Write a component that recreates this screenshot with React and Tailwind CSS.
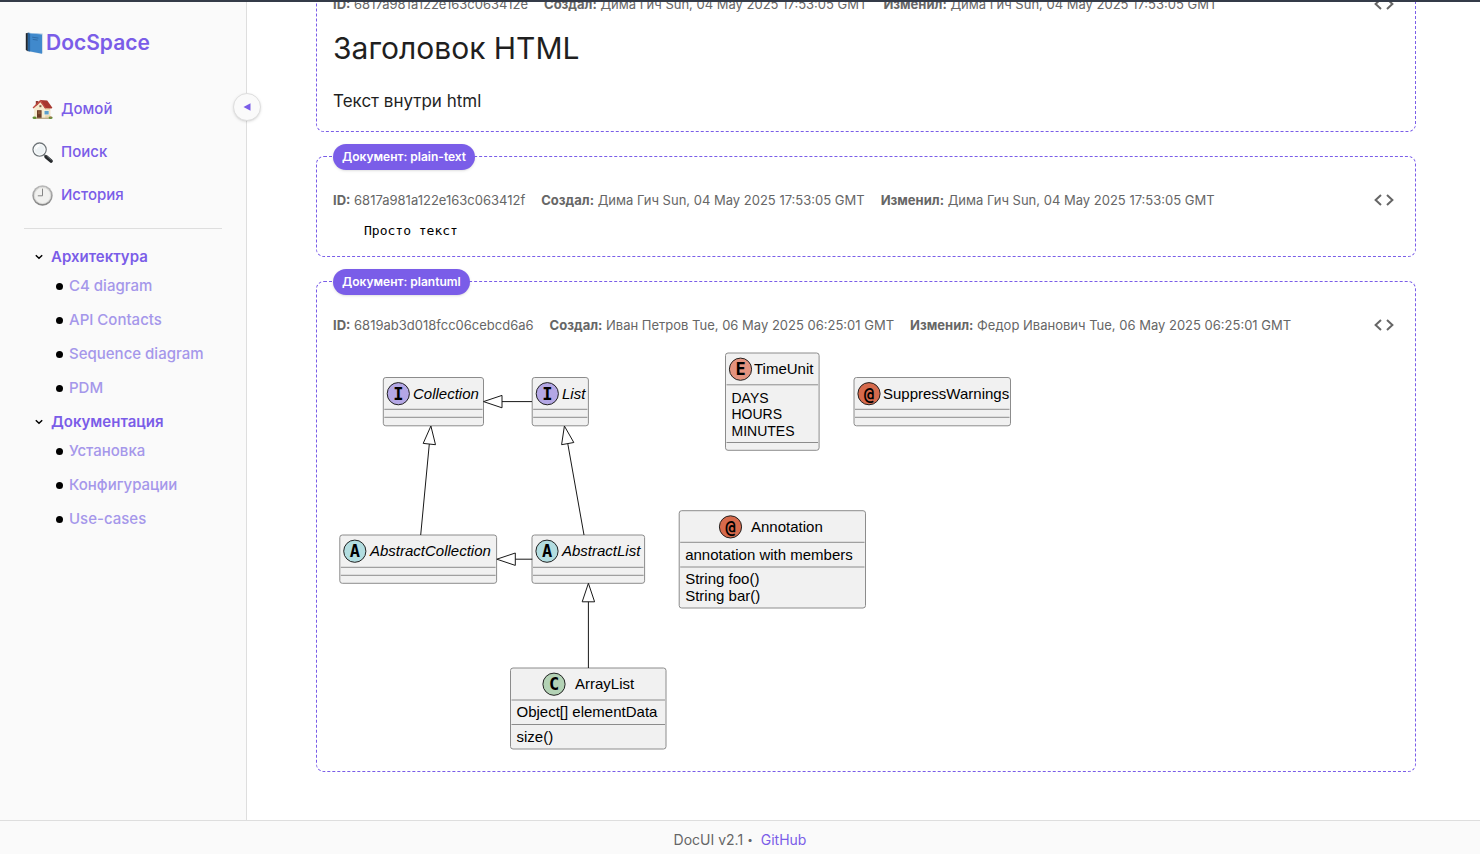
import { useState } from "react";

function BookIcon() {
  return (
    <svg viewBox="0 0 19 23" className="h-[23px] w-5 shrink-0" aria-hidden="true">
      <path d="M1.3 1.3 3.8.8v18.6L1.3 18z" fill="#20262e" />
      <path d="M3.4.8 17.4 1.6l1.2.9v17.8L17 22.1 3.4 19.4z" fill="#e4e7ea" />
      <path d="M3.4.8 17.6 2.2v19.6L3.4 19z" fill="#4089cc" />
      <path d="M3.4.8 5.6 1v18.5L3.4 19z" fill="#27629c" />
      <path d="M3.4.8 18.6 1.8l-.9.7L5.6 1.4z" fill="#a9c9e6" />
      <path d="M7.7 5.2l6.2.9M8.2 7.4l5 .7" stroke="#2f6ca8" strokeWidth="1" fill="none" />
    </svg>
  );
}

function HouseIcon() {
  return (
    <svg viewBox="0 0 21 21" className="size-[21px] shrink-0" aria-hidden="true">
      <path d="M3.8 2h2.6v4.5H3.8z" fill="#8f3b32" />
      <path d="M2.6 9 8.5 3l9.8 6.2v10.3H2.6z" fill="#e9d8b0" />
      <path d="M2.6 9 8.6 3.4l4.6 6v10H2.6z" fill="#f6ebcf" />
      <path d="M8.4.9 15.2 1.6l5.2 7.2-.9.8-6.6-.4z" fill="#a8382f" />
      <path d="M8.4.7.6 8.4l.9 1.1L8.4 3.3l4.6 6.2 1.2-.6z" fill="#bf4a40" />
      <path d="M5 11.2h4.6v8.4H5z" fill="#6b3a26" />
      <path d="M5.9 12.2h2.8v3H5.9z" fill="#8c5a3b" />
      <path d="M11.8 11.2h5.6v5h-5.6z" fill="#fff8e4" />
      <path d="M12.5 11.9h4.2v3.6h-4.2z" fill="#5c9fcc" />
      <path d="M7.4 6.2h2v2h-2z" fill="#826148" />
      <path d="M2.8 18.7h15.7v1.2H2.8z" fill="#b9a685" />
      <ellipse cx="2.5" cy="18.8" rx="2" ry="1.3" fill="#5f8f35" />
      <ellipse cx="18.6" cy="18.8" rx="2" ry="1.3" fill="#5f8f35" />
      <circle cx="18.8" cy="18.1" r=".7" fill="#cf5a55" />
    </svg>
  );
}

function SearchIcon() {
  return (
    <svg viewBox="0 0 21 21" className="size-[21px] shrink-0" aria-hidden="true">
      <path d="m11.8 12.4 3 3" stroke="#8b9094" strokeWidth="2" />
      <path d="m14.2 14.8 4.8 4.2" stroke="#25282b" strokeWidth="3.6" strokeLinecap="round" />
      <path d="m14.8 14.2 4.4 3.8" stroke="#6a6f73" strokeWidth=".8" strokeLinecap="round" />
      <circle cx="7.6" cy="7.6" r="6.6" fill="#edf2f4" stroke="#6d7377" strokeWidth="1.3" />
      <circle cx="7.6" cy="7.6" r="5.4" fill="none" stroke="#fff" strokeWidth=".8" />
      <path d="M4.2 7.2a3.6 3.6 0 0 1 3.4-3.4" stroke="#fff" strokeWidth="1.4" fill="none" />
    </svg>
  );
}

function ClockIcon() {
  return (
    <svg viewBox="0 0 21 21" className="size-[21px] shrink-0" aria-hidden="true">
      <defs>
        <linearGradient id="clock-rim" x1="0" y1="0" x2="0" y2="1">
          <stop offset="0" stopColor="#bcbcbc" />
          <stop offset="1" stopColor="#858585" />
        </linearGradient>
      </defs>
      <circle cx="10.5" cy="10.5" r="10.2" fill="url(#clock-rim)" />
      <circle cx="10.5" cy="10.5" r="8.5" fill="#f1f1ef" />
      <circle cx="10.5" cy="10.5" r="8.1" fill="none" stroke="#d5d5d3" strokeWidth=".8" />
      <path d="M10.5 3.6v7.2H5.8" fill="none" stroke="#858585" strokeWidth="1" />
    </svg>
  );
}

const mainLinks = [
  { label: "Домой", Icon: HouseIcon },
  { label: "Поиск", Icon: SearchIcon },
  { label: "История", Icon: ClockIcon },
];

const sections = [
  { title: "Архитектура", items: ["C4 diagram", "API Contacts", "Sequence diagram", "PDM"] },
  { title: "Документация", items: ["Установка", "Конфигурации", "Use-cases"] },
];

function Section({ title, items }) {
  const [open, setOpen] = useState(true);
  return (
    <section>
      <button
        type="button"
        aria-expanded={open}
        onClick={() => setOpen(!open)}
        className="flex h-6 items-center gap-2 text-[15px] font-semibold text-[#7a5de8]"
      >
        <svg viewBox="0 0 8 6" className="h-1.5 w-2" aria-hidden="true">
          <path d="m.8 1.2 3.2 3 3.2-3" fill="none" stroke="#000" strokeWidth="1.5" />
        </svg>
        {title}
      </button>
      {open && (
        <ul className="pl-[21px]">
          {items.map((item) => (
            <li key={item} className="flex h-[34px] items-center gap-1.5">
              <span className="size-[7px] rounded-full bg-black" />
              <a href="#" className="text-[15px] font-medium text-[#a597ea]">
                {item}
              </a>
            </li>
          ))}
        </ul>
      )}
    </section>
  );
}

function Sidebar() {
  return (
    <aside className="relative w-[247px] shrink-0 border-r border-[#dedede] bg-[#fafafa] px-6 pt-[29px]">
      <a href="#" className="flex h-6 items-center gap-0.5 text-[21px] font-semibold text-[#7a5de8]">
        <BookIcon />
        DocSpace
      </a>
      <nav className="mt-[33px] flex flex-col gap-px border-b border-[#dedede] pb-3 pl-2">
        {mainLinks.map(({ label, Icon }) => (
          <a key={label} href="#" className="flex h-[42px] items-center gap-2 text-[15px] font-medium text-[#7a5de8]">
            <Icon />
            {label}
          </a>
        ))}
      </nav>
      <nav className="mt-4 flex flex-col gap-[5px] pl-[11px]">
        {sections.map((section) => (
          <Section key={section.title} {...section} />
        ))}
      </nav>
      <button
        type="button"
        aria-label="Свернуть меню"
        className="absolute top-[91px] -right-[15px] z-10 flex size-7 items-center justify-center rounded-full border border-[#dedede] bg-[#fafafa] shadow-sm"
      >
        <svg viewBox="0 0 8 8" className="size-2" aria-hidden="true">
          <path d="M.5 4 7.5.2v7.6z" fill="#7a5de8" />
        </svg>
      </button>
    </aside>
  );
}

function DocCard({ type, id, created, changed, children }) {
  return (
    <article className="relative rounded-lg border border-dashed border-[#7a5de8] px-4 pt-[27px] pb-4">
      <span className="absolute -top-[13px] left-4 flex h-[26px] items-center rounded-full bg-[#7a5de8] px-[9px] text-xs font-semibold text-white shadow-sm">
        Документ: {type}
      </span>
      <header className="flex h-8 items-center justify-between text-[13px] text-[#666]">
        <div className="flex gap-4 pt-0.5">
          <span><strong className="font-bold">ID:</strong> {id}</span>
          <span><strong className="font-bold">Создал:</strong> {created}</span>
          <span><strong className="font-bold">Изменил:</strong> {changed}</span>
        </div>
        <button type="button" aria-label="Исходный код" className="flex h-8 w-[30px] items-center justify-center">
          <svg viewBox="0 0 20 12" className="h-3 w-5" aria-hidden="true">
            <path d="M7 .9 1.6 6 7 11.1M13 .9 18.4 6 13 11.1" fill="none" stroke="#666" strokeWidth="2" />
          </svg>
        </button>
      </header>
      {children}
    </article>
  );
}

const nodes = [
  { x: 50.3, y: 36.5, w: 100.2, h: 48.3, kind: "I", fill: "#b4a7e5", cx: 65.3, name: "Collection", tx: 80, italic: true, lines: [68.3, 76.3] },
  { x: 199.2, y: 36.5, w: 56.2, h: 48.3, kind: "I", fill: "#b4a7e5", cx: 214.3, name: "List", tx: 229, italic: true, lines: [68.3, 76.3] },
  { x: 6.8, y: 194, w: 156.8, h: 48.3, kind: "A", fill: "#b2dde0", cx: 21.8, name: "AbstractCollection", tx: 37, italic: true, lines: [226.3, 234.3] },
  { x: 199, y: 194, w: 112.6, h: 48.3, kind: "A", fill: "#b2dde0", cx: 214, name: "AbstractList", tx: 229, italic: true, lines: [226.3, 234.3] },
  { x: 177.5, y: 327, w: 155.5, h: 81, kind: "C", fill: "#b3d2b5", cx: 221, name: "ArrayList", tx: 242, lines: [359, 383.5], rows: [["Object[] elementData", 376], ["size()", 401]] },
  { x: 346.2, y: 169.7, w: 186.3, h: 97.3, kind: "@", fill: "#d66a4c", cx: 397.5, name: "Annotation", tx: 418, lines: [201.3, 226], rows: [["annotation with members", 219], ["String foo()", 243], ["String bar()", 260]] },
  { x: 392.5, y: 12, w: 93.6, h: 97.3, kind: "E", fill: "#e4937f", cx: 407.5, name: "TimeUnit", tx: 421, lines: [43.8, 101.5], rows: [["DAYS", 62], ["HOURS", 78], ["MINUTES", 95]] },
  { x: 521, y: 36.5, w: 156.5, h: 48.3, kind: "@", fill: "#d66a4c", cx: 536, name: "SuppressWarnings", tx: 550, lines: [68.3, 76.3] },
];

const edges = [
  "M150.5 60.6 169 54.4v12.4zM169 60.6h30",
  "M163.8 218.2 182.3 212v12.4zM182.3 218.2h17",
  "M97.9 85 90.2 102.4l12.3 1.3zM96.3 103 87.7 194",
  "M231.4 85 228.6 103.7l12.2-2.2zM234.8 102.8 251 194",
  "M255.4 242.3 249.2 260.8h12.4zM255.4 260.8V327",
];

function ClassDiagram() {
  return (
    <svg
      viewBox="0 0 700 414"
      role="img"
      aria-label="Диаграмма классов"
      className="h-[414px] w-[700px] max-w-full font-['Liberation_Sans',Arial,sans-serif]"
    >
      {nodes.map((n) => (
        <g key={n.name}>
          <rect x={n.x} y={n.y} width={n.w} height={n.h} rx="2.5" fill="#f1f1f1" stroke="#8c8c8c" strokeWidth="1" />
          {n.lines.map((y) => (
            <path key={y} d={`M${n.x + 1} ${y}h${n.w - 2}`} stroke="#8c8c8c" strokeWidth="1" />
          ))}
          <circle cx={n.cx} cy={n.y + 16.2} r="11.1" fill={n.fill} stroke="#222" strokeWidth="1" />
          <text
            x={n.cx}
            y={n.y + 22}
            textAnchor="middle"
            className="font-['DejaVu_Sans_Mono',monospace] text-[17px] font-bold"
          >
            {n.kind}
          </text>
          <text x={n.tx} y={n.y + 21} className={n.italic ? "text-[15px] italic" : "text-[15px]"}>
            {n.name}
          </text>
          {(n.rows || []).map(([label, y]) => (
            <text key={label} x={n.x + 6} y={y} className={n.kind === "E" ? "text-sm" : "text-[15px]"}>
              {label}
            </text>
          ))}
        </g>
      ))}
      {edges.map((d) => (
        <path key={d} d={d} fill="none" stroke="#181818" strokeWidth="1" />
      ))}
    </svg>
  );
}

export default function App() {
  return (
    <div className="flex h-screen flex-col border-t-2 border-[#343b48] bg-white font-[Inter,'Noto_Sans',sans-serif] text-[#1f1f1f]">
      <div className="flex min-h-0 flex-1">
        <Sidebar />
        <main className="flex min-w-0 flex-1 flex-col justify-end gap-6 overflow-hidden pr-16 pb-12 pl-[69px]">
          <DocCard
            type="html"
            id="6817a981a122e163c063412e"
            created="Дима Гич Sun, 04 May 2025 17:53:05 GMT"
            changed="Дима Гич Sun, 04 May 2025 17:53:05 GMT"
          >
            <h1 className="mt-2 text-[30px] leading-10">Заголовок HTML</h1>
            <p className="mt-[19px] text-[17px] leading-7">Текст внутри html</p>
          </DocCard>
          <DocCard
            type="plain-text"
            id="6817a981a122e163c063412f"
            created="Дима Гич Sun, 04 May 2025 17:53:05 GMT"
            changed="Дима Гич Sun, 04 May 2025 17:53:05 GMT"
          >
            <pre className="mt-1.5 pl-[31px] font-['DejaVu_Sans_Mono',monospace] text-[13px] leading-[18px] text-black">Просто текст</pre>
          </DocCard>
          <DocCard
            type="plantuml"
            id="6819ab3d018fcc06cebcd6a6"
            created="Иван Петров Tue, 06 May 2025 06:25:01 GMT"
            changed="Федор Иванович Tue, 06 May 2025 06:25:01 GMT"
          >
            <ClassDiagram />
          </DocCard>
        </main>
      </div>
      <footer className="flex h-[34px] shrink-0 items-center justify-center gap-2 border-t border-[#dedede] bg-[#fafafa] pt-1 text-sm text-[#666]">
        <span className="flex items-center gap-1">
          DocUI v2.1 <span className="text-[10px]">•</span>
        </span>
        <a href="#" className="text-[#7a5de8]">GitHub</a>
      </footer>
    </div>
  );
}
